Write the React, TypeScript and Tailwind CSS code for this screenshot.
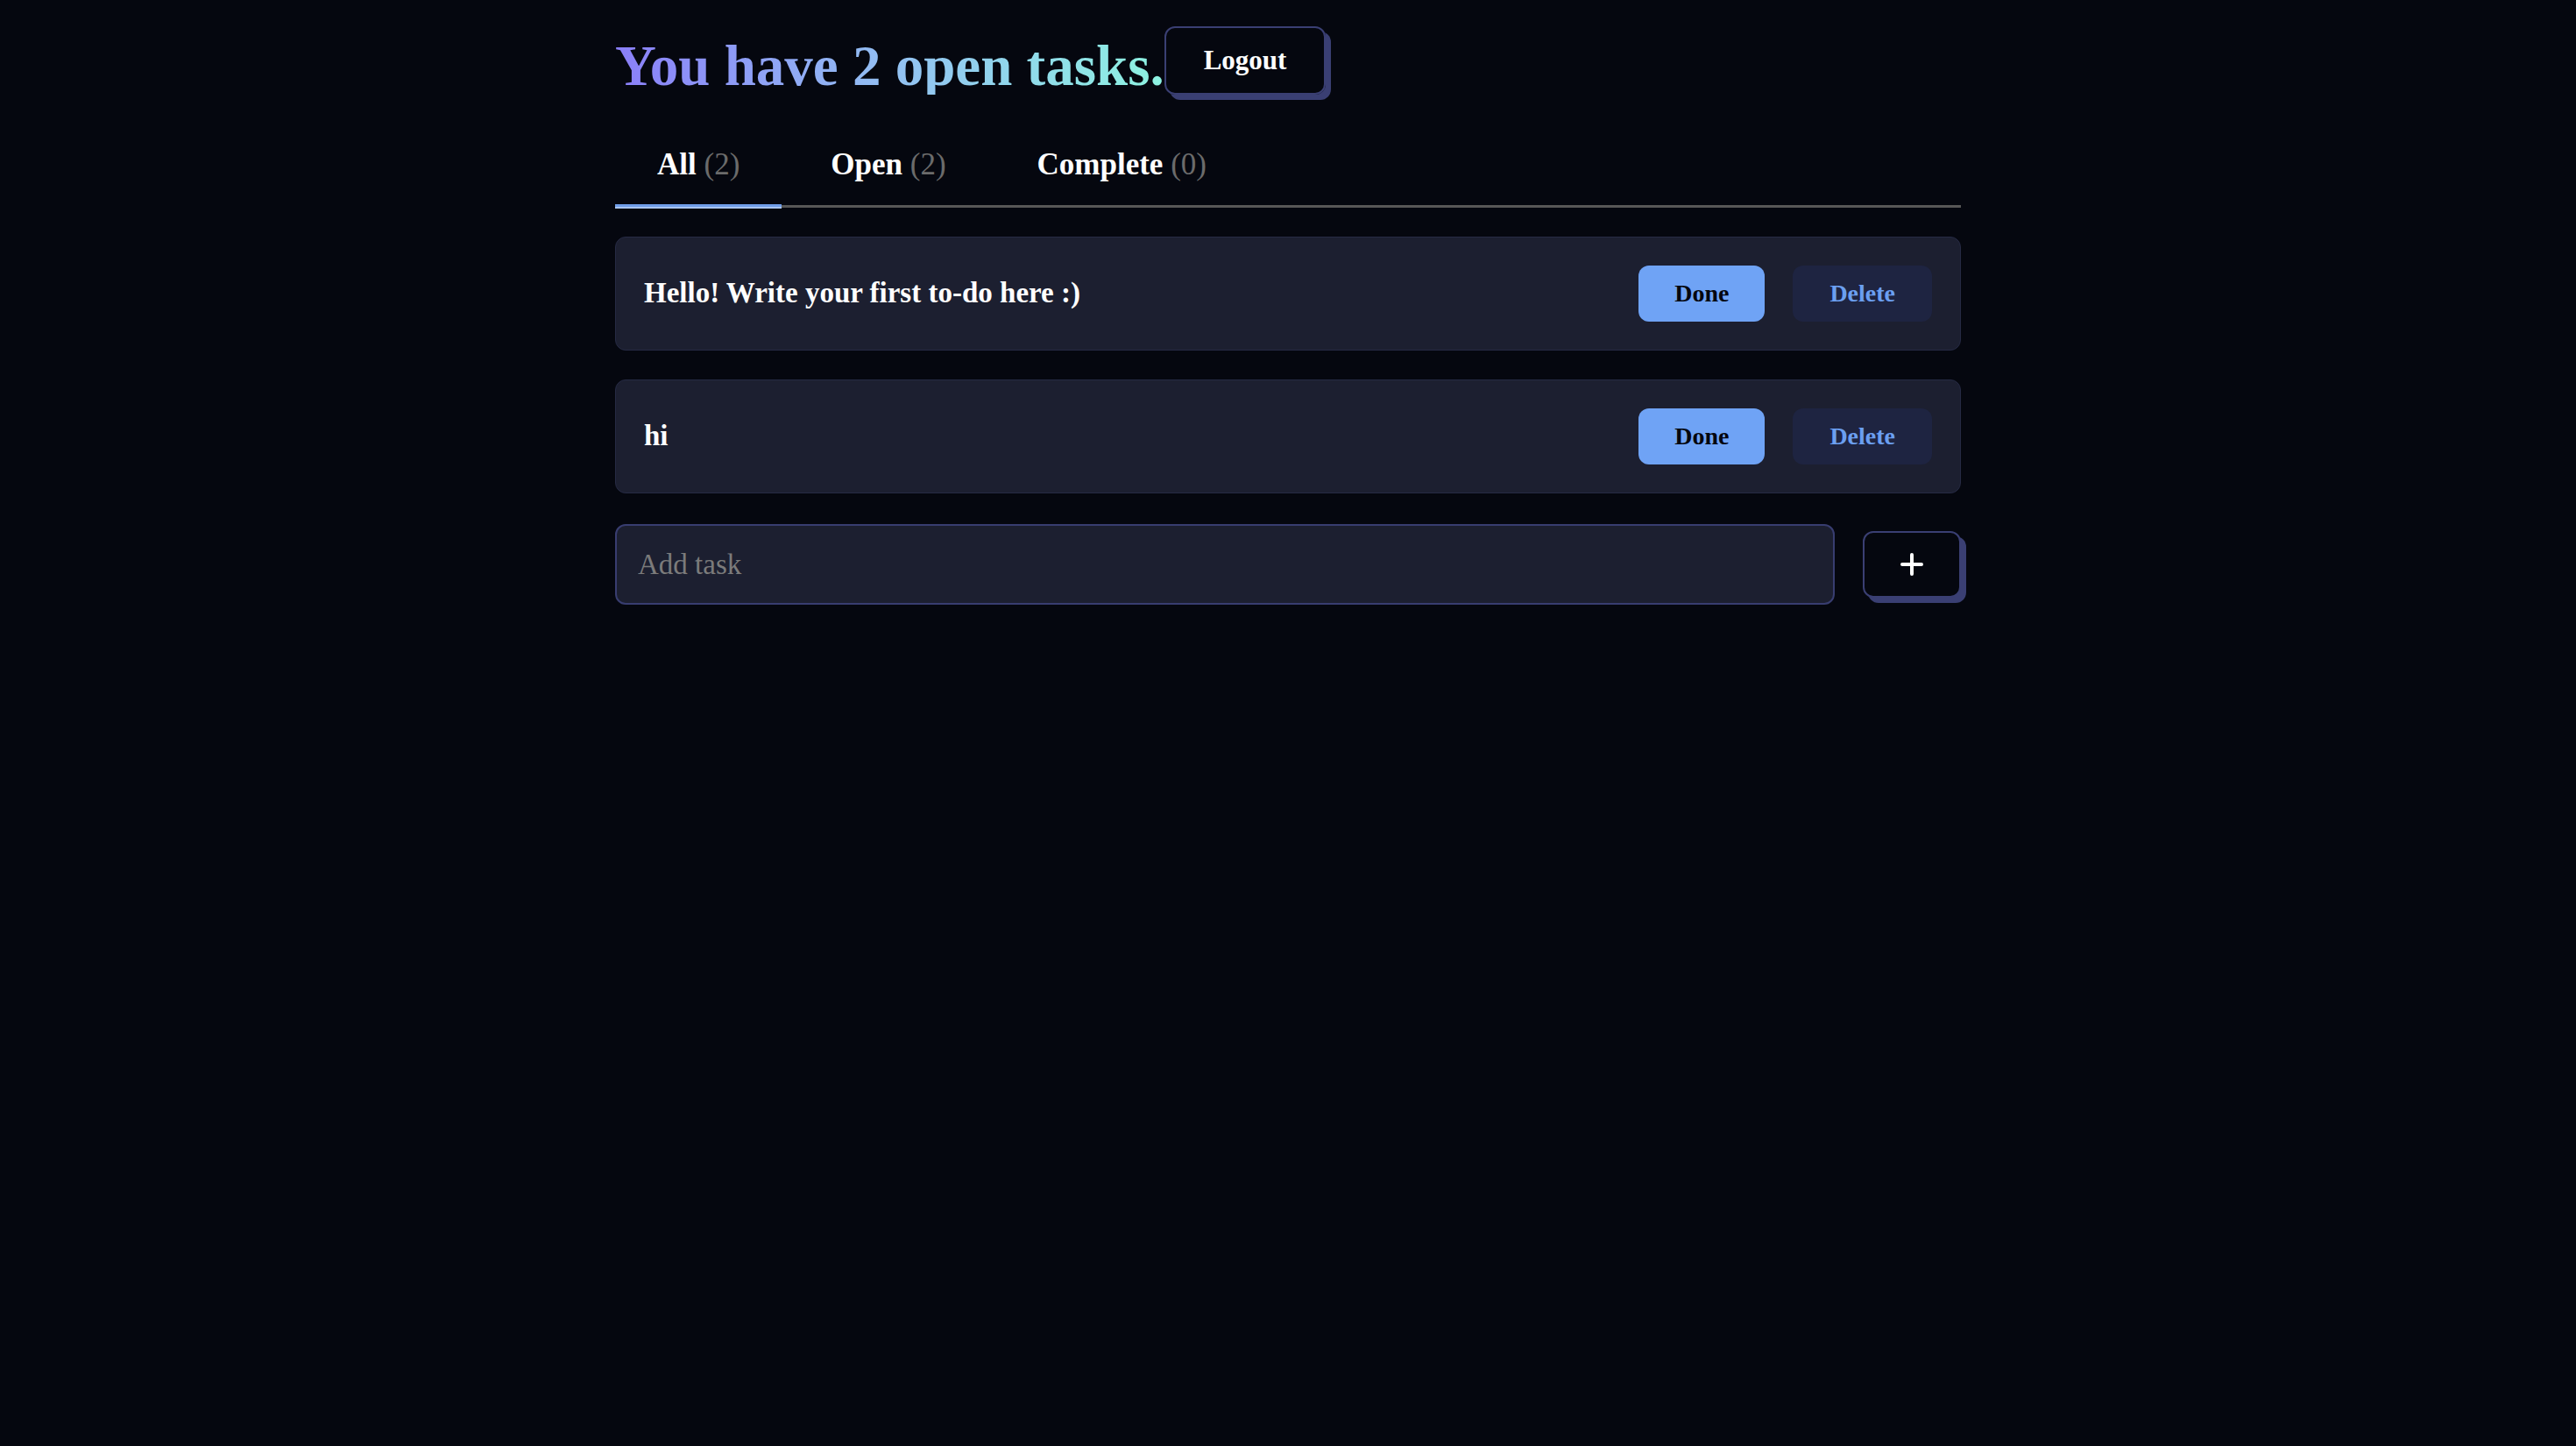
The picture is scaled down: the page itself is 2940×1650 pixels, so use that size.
import React from "react";

const tasks = [
  { id: 1, text: "Hello! Write your first to-do here :)" },
  { id: 2, text: "hi" },
];

const tabs = [
  { label: "All", count: 2, active: true },
  { label: "Open", count: 2, active: false },
  { label: "Complete", count: 0, active: false },
];

function PlusIcon() {
  return (
    <svg width="26" height="26" viewBox="0 0 26 26" fill="none">
      <path d="M13 2v22M2 13h22" stroke="white" strokeWidth="4" strokeLinecap="round" />
    </svg>
  );
}

export default function App() {
  return (
    <div className="min-h-screen bg-[#05070f] font-['Liberation_Serif','Times_New_Roman',serif] text-white">
      <div className="mx-auto w-[1536px]">
        {/* Header */}
        <div className="flex items-end pt-[30px]">
          <h1 className="bg-linear-to-r from-[#8a7ef8] via-[#93c0f2] to-[#8df3e1] bg-clip-text text-[65px] font-bold leading-none text-transparent">
            You have 2 open tasks.
          </h1>
          <button className="h-[78px] rounded-xl border-2 border-[#3a3f73] px-[43px] text-[31px] font-bold text-white shadow-[6px_6px_0_0_#3a3f73]">
            Logout
          </button>
        </div>

        {/* Tabs */}
        <div className="mt-[53px] flex gap-2 border-b-[3px] border-[#575757]">
          {tabs.map((tab) => (
            <button key={tab.label} className="relative px-12 pb-[19px] text-[35px] leading-[54px]">
              <span className="font-bold text-white">{tab.label}</span>{" "}
              <span className="font-normal text-[#6b6b6b]">({tab.count})</span>
              {tab.active && (
                <span className="absolute -bottom-[4px] left-0 right-0 h-[5px] border-b-2 border-[#a9c4ef] bg-[#6f9de8]" />
              )}
            </button>
          ))}
        </div>

        {/* Task list */}
        <div className="mt-[33px] flex flex-col gap-[33px]">
          {tasks.map((task) => (
            <div
              key={task.id}
              className="flex items-center justify-between rounded-xl border border-[#262a44] bg-[#1c1f30] py-8 pl-8 pr-8"
            >
              <span className="-mt-[2px] text-[33px] font-bold leading-[48px] text-white">{task.text}</span>
              <div className="flex items-center gap-8">
                <button className="h-16 rounded-xl bg-[#6fa3f5] px-[41px] text-[28px] font-bold text-[#05070f]">
                  Done
                </button>
                <button className="h-16 rounded-xl bg-[#1e2441] px-[42px] text-[28px] font-bold text-[#6b9ff0]">
                  Delete
                </button>
              </div>
            </div>
          ))}
        </div>

        {/* Add task */}
        <div className="mt-[35px] flex items-center gap-8">
          <input
            type="text"
            placeholder="Add task"
            className="h-[92px] flex-1 rounded-xl border-2 border-[#383d70] bg-[#1c1f30] px-6 text-[33px] text-white outline-none placeholder:text-[#7b7b7b]"
          />
          <button className="flex h-[76px] w-[112px] items-center justify-center rounded-xl border-2 border-[#3a3f73] bg-[#05070f] shadow-[6px_6px_0_0_#3a3f73]">
            <PlusIcon />
          </button>
        </div>
      </div>
    </div>
  );
}
